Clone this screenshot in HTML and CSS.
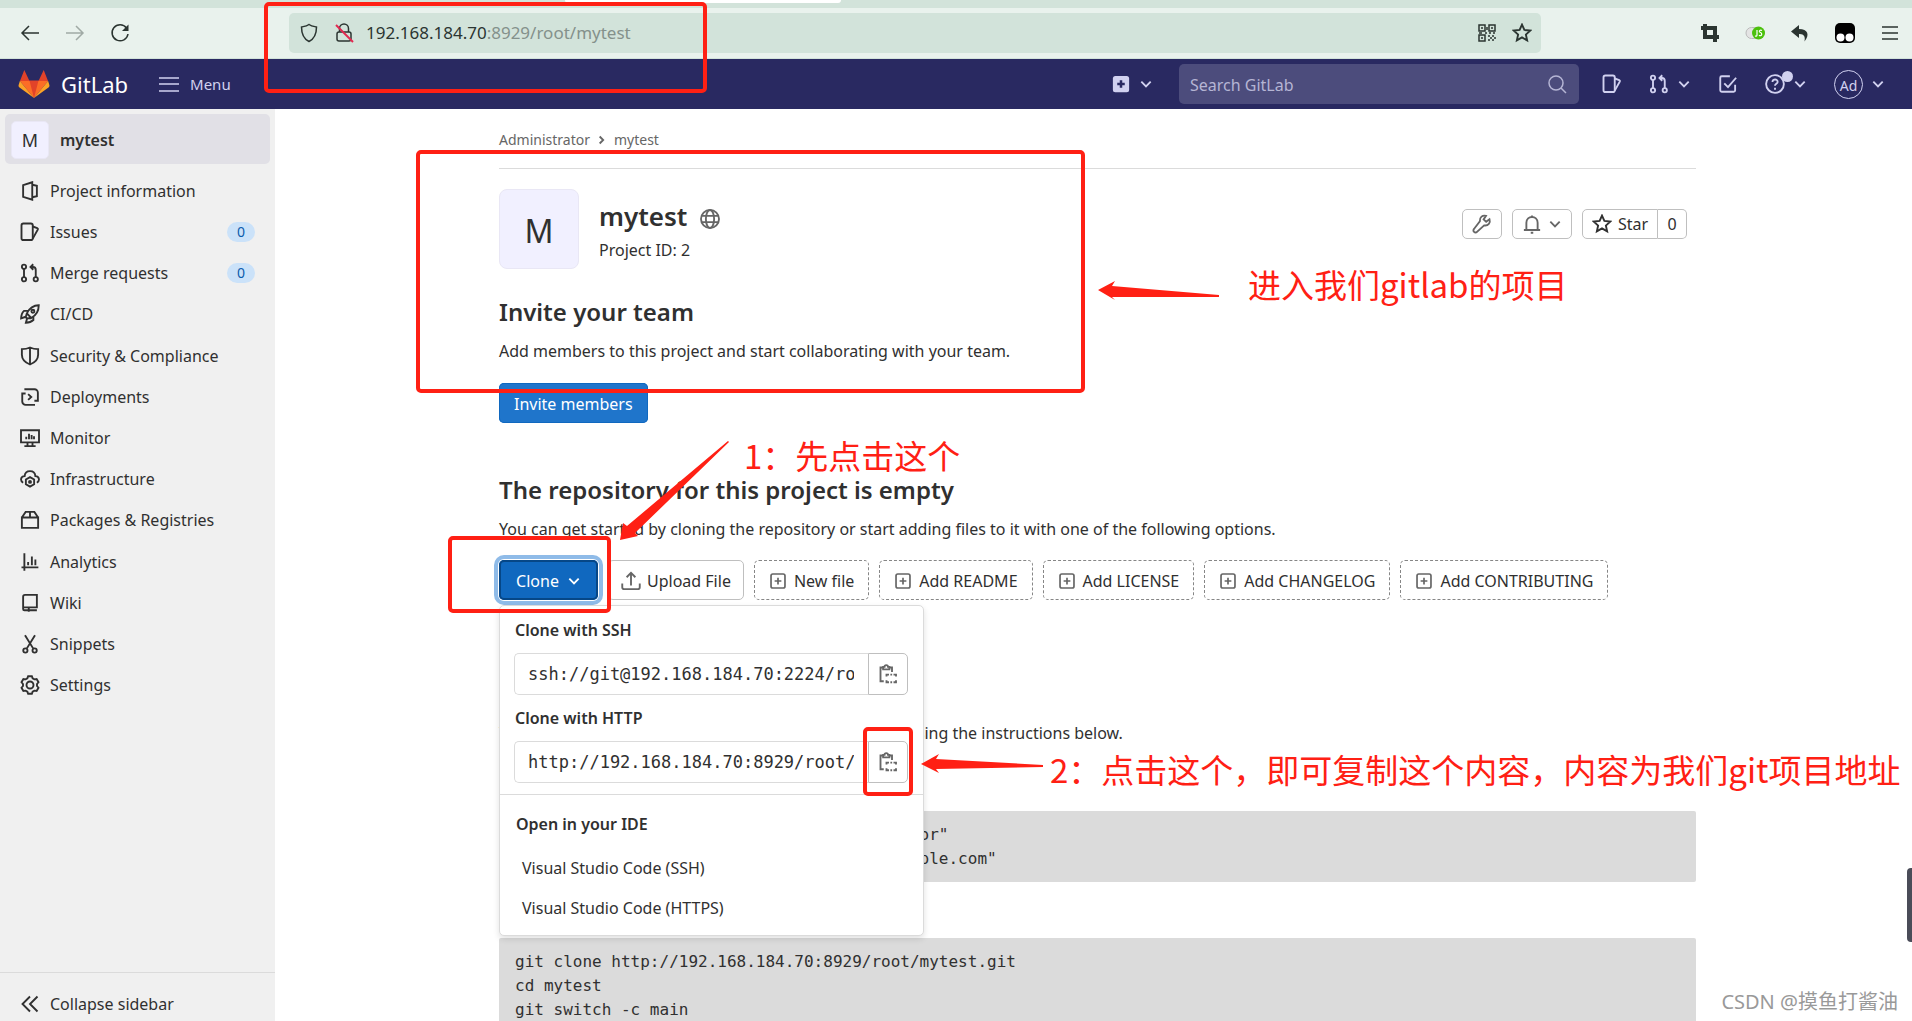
FILE: index.html
```html
<!DOCTYPE html>
<html lang="en">
<head>
<meta charset="utf-8">
<title>Administrator / mytest · GitLab</title>
<link rel="stylesheet" href="styles.css">
</head>
<body>
<svg class="defs" aria-hidden="true">
  <symbol id="chevron" viewBox="0 0 12 12"><path d="M2 4l4 4 4-4"/></symbol>
  <symbol id="issues" viewBox="0 0 16 16"><rect x="1.2" y="1.2" width="9" height="13.2" rx="1.5"/><path d="M10.2 3.6l3.6 1.3a.8.8 0 0 1 .5 1l-4.1 7.4"/></symbol>
  <symbol id="merge" viewBox="0 0 16 16"><circle cx="3.2" cy="3" r="1.7"/><circle cx="3.2" cy="13" r="1.7"/><circle cx="12.6" cy="13" r="1.7"/><path d="M3.2 4.7v6.6M12.6 11.3V5.5c0-1.4-.8-2.3-2.2-2.3H8.8M10.6 1L8.4 3.2l2.2 2.2"/></symbol>
  <symbol id="plus-box" viewBox="0 0 16 16"><rect x="1.8" y="1.8" width="12.4" height="12.4" rx="1.6"/><path d="M8 5v6M5 8h6"/></symbol>
  <symbol id="paste" viewBox="0 0 16 16"><path d="M4.500 2.800H2v11h2.600M9 2.800h2.200v3.500M4.100 4.300h5v-2H8a1.400 1.400 0 0 0-2.800 0H4.100z"/><path d="M6.800 10V8.500h2M12.400 8.500h2V10M6.800 12.900v1.700h2M12.400 14.600h2v-1.700M9.900 8.500h1.400M9.900 14.600h1.400"/></symbol>
  <symbol id="star" viewBox="0 0 16 16"><path d="M8 1.300l1.900 4.300 4.700.500-3.500 3.100 1 4.700L8 11.500l-4.100 2.400 1-4.700L1.400 6.100l4.700-.500z"/></symbol>
</svg>

<header class="browser">
  <div class="tabs"><span class="tab"></span></div>
  <div class="toolbar">
    <nav class="history" aria-label="History">
      <button type="button" aria-label="Back"><svg class="icon" viewBox="0 0 20 20"><path d="M19 10H2M9 3l-7 7 7 7"/></svg></button>
      <button type="button" aria-label="Forward" class="faded"><svg class="icon" viewBox="0 0 20 20"><path d="M1 10h17M11 3l7 7-7 7"/></svg></button>
      <button type="button" aria-label="Reload"><svg class="icon" viewBox="0 0 20 20"><path d="M16.500 5A8 8 0 1 0 18 11"/><path class="solid" d="M18.500 1.500v6.500H12z"/></svg></button>
    </nav>
    <div class="address">
      <svg class="icon" viewBox="0 0 20 20"><path d="M10 1.500c2 1.500 5 2 7.500 2.500 0 7-1.500 11.500-7.500 14.500C4 15.500 2.500 11 2.500 4 5 3.500 8 3 10 1.500z"/></svg>
      <svg class="icon lock" viewBox="0 0 20 20"><rect x="3" y="9" width="14" height="9" rx="2"/><path d="M5.500 9V5.500a4.500 4.500 0 0 1 9 0V9"/><path class="slash" d="M2 2l17 17"/></svg>
      <span class="url">192.168.184.70<span>:8929/root/mytest</span></span>
      <svg class="icon qr" viewBox="0 0 20 20"><path d="M2 2h6v6H2zM12 2h6v6h-6zM2 12h6v6H2z"/><path d="M4 5h2M14 5h2M4 15h2M8 10h2M12 10h2M16 10h2M11 13h2M15 13h2M13 15h2M17 15h2M11 17h2M15 17h2M2 10h3M10 4v3"/></svg>
      <svg class="icon" viewBox="0 0 16 16"><use href="#star"/></svg>
    </div>
    <div class="extensions">
      <svg class="icon bold" viewBox="0 0 20 20"><path d="M5 1v13h14M1 5h14v14"/></svg>
      <svg class="icon" viewBox="0 0 20 20"><rect x="1" y="4.500" width="18" height="11" rx="5.500" fill="#e4e4e4" stroke="#bbb" stroke-width="1"/><circle cx="13.500" cy="10" r="6.500" fill="#4bc10c" stroke="none"/><path d="M12 7v5c0 1-.5 1.300-2 1M17 7.500c-2-.9-3 .3-2.500 1.300.600 1 2.500.800 2.200 2.700-.300 1.400-1.700 1.500-2.700.800" stroke="#fff" stroke-width="1.200"/></svg>
      <svg class="icon" viewBox="0 0 20 20"><path class="solid" d="M9 2L1 8.500 9 15v-4c5-.3 6.500 2.500 5.500 7.500C20 12 18 6 9 6z"/></svg>
      <svg class="icon" viewBox="0 0 20 20"><rect x="0" y="0" width="20" height="20" rx="5" fill="#000" stroke="none"/><circle cx="5.500" cy="14.500" r="4" fill="#fff" stroke="none"/><circle cx="14.500" cy="14.500" r="4" fill="#fff" stroke="none"/></svg>
      <svg class="icon" viewBox="0 0 20 20"><path d="M2 4h16M2 10h16M2 16h16"/></svg>
    </div>
  </div>
</header>

<header class="navbar">
  <a class="brand" href="#">
    <svg viewBox="0 0 36 34"><path fill="#e24329" d="M18 33L6 13h24z"/><path fill="#e24329" d="M7 1l6 13H2zM29 1l-6 13h11z"/><path fill="#fc6d26" d="M18 33L13 13.500H2zM18 33l5-19.500h11z"/><path fill="#fca326" d="M2 13.500L.500 18.500c-.200.900 0 1.600.700 2.100L18 33zM34 13.500l1.500 5c.2.900 0 1.600-.7 2.100L18 33z"/></svg>
    GitLab
  </a>
  <button type="button" class="menu"><svg class="icon" viewBox="0 0 20 20"><path d="M0 4h20M0 10h20M0 17h20"/></svg>Menu</button>
  <button type="button" class="create" aria-label="Create new"><svg class="icon" viewBox="0 0 16 16"><rect class="solid" x="1.500" y="1.500" width="13" height="13" rx="2"/><path d="M8 5v6M5 8h6" stroke="#292961" stroke-width="2"/></svg><svg class="chev"><use href="#chevron"/></svg></button>
  <form class="search">
    <input type="text" placeholder="Search GitLab" aria-label="Search GitLab">
    <svg class="icon" viewBox="0 0 20 20"><circle cx="9" cy="9" r="7"/><path d="M14 14l5 5"/></svg>
  </form>
  <nav class="user-links" aria-label="User">
    <button type="button" aria-label="Issues"><svg class="icon"><use href="#issues"/></svg></button>
    <button type="button" aria-label="Merge requests"><svg class="icon"><use href="#merge"/></svg><svg class="chev"><use href="#chevron"/></svg></button>
    <button type="button" aria-label="To-do list"><svg class="icon" viewBox="0 0 16 16"><path d="M9.500 1.800H3a1.200 1.200 0 0 0-1.200 1.200v10A1.200 1.200 0 0 0 3 14.200h9.500a1.200 1.200 0 0 0 1.200-1.200V8.500M5 7.500l3 3 6.500-7.500"/></svg></button>
    <button type="button" aria-label="Help" class="help"><svg class="icon" viewBox="0 0 16 16"><circle cx="8" cy="8" r="7.100"/><path d="M6 6.300c0-2.600 4.200-2.500 4.100 0C10.100 7.800 8 7.700 8 9.300M8 11v1.500"/></svg><span class="dot"></span><svg class="chev"><use href="#chevron"/></svg></button>
    <button type="button" aria-label="Account"><span class="account">Ad</span><svg class="chev"><use href="#chevron"/></svg></button>
  </nav>
</header>

<div class="body">
  <aside class="sidebar">
    <a class="project" href="#"><span class="tile">M</span>mytest</a>
    <ul>
      <li><a href="#"><svg class="icon" viewBox="0 0 16 16"><path d="M9.800 1L2.500 3.300v9.400L9.800 15zM9.800 3l3.700.800v8.400l-3.700.800"/></svg>Project information</a></li>
      <li><a href="#"><svg class="icon"><use href="#issues"/></svg>Issues<span class="count">0</span></a></li>
      <li><a href="#"><svg class="icon"><use href="#merge"/></svg>Merge requests<span class="count">0</span></a></li>
      <li><a href="#"><svg class="icon" viewBox="0 0 16 16"><path d="M15 1c-5 0-7.500 2.500-9.500 6.500L9 11.200c4-2.200 6-4.700 6-10.200zM6.500 5.500H3.200C1.500 7 1 9 .9 11.500l3.600-1.300M10.700 9.800v3c-1.500 1.500-3.500 2.200-6 2.200l1-3.500M5.500 7.500l-1 3.200 1.200.800L9 11.200"/><circle cx="10.300" cy="5.800" r="1.200"/></svg>CI/CD</a></li>
      <li><a href="#"><svg class="icon" viewBox="0 0 16 16"><path d="M8 1.200c-2 .9-4.200 1.300-6.500 1.300v4.500c0 3.800 3 6.400 6.500 7.800 3.500-1.400 6.500-4 6.500-7.800V2.500C12.200 2.500 10 2.100 8 1.200zM8 1.200v13.600"/></svg>Security &amp; Compliance</a></li>
      <li><a href="#"><svg class="icon" viewBox="0 0 16 16"><path d="M3.500 1.800h8A2.700 2.700 0 0 1 14.300 4.500v6.500h-2.800M12 14.300H4.500A2.700 2.700 0 0 1 1.800 11.600V5.200h2.700M6.500 5.700L9 8l-2.500 2.300"/></svg>Deployments</a></li>
      <li><a href="#"><svg class="icon" viewBox="0 0 16 16"><path d="M.8 1.800h14.400v9.700H.8zM6 11.500v3M10 11.500v3M3.500 14.500h9M5 7v2M7.200 4.500V9M9.300 5.500V9M11.200 6.500V9"/></svg>Monitor</a></li>
      <li><a href="#"><svg class="icon" viewBox="0 0 16 16"><path d="M2.500 11C0 9.500.3 6 3.700 5.700 4.200.3 11.800.3 12.300 5.700c3.400.3 3.700 3.800 1.200 5.300"/><path d="M8 6.500l3.300 1.900v3.800L8 14.100l-3.300-1.900V8.400z"/><circle cx="8" cy="10.300" r=".8"/></svg>Infrastructure</a></li>
      <li><a href="#"><svg class="icon" viewBox="0 0 16 16"><path d="M1.500 6h13v8.300h-13zM1.500 6l3-4.500h7l3 4.500M8 1.500V6"/></svg>Packages &amp; Registries</a></li>
      <li><a href="#"><svg class="icon" viewBox="0 0 16 16"><path d="M3.500 1v14M1.200 12.300h13.500M6.500 8v2.500M9.500 3.500v7M12.300 6v4.500"/></svg>Analytics</a></li>
      <li><a href="#"><svg class="icon" viewBox="0 0 16 16"><path d="M4 1.500h9.500V11.500h-11V3A1.500 1.500 0 0 1 4 1.500zM2.500 11.500v1.300c0 .6.500 1 1 1h10M7 12v3"/></svg>Wiki</a></li>
      <li><a href="#"><svg class="icon" viewBox="0 0 16 16"><path d="M4 1l6.500 10.500M12 1L5.500 11.500"/><circle cx="4.300" cy="13.200" r="1.700"/><circle cx="11.700" cy="13.200" r="1.700"/></svg>Snippets</a></li>
      <li><a href="#"><svg class="icon" viewBox="0 0 16 16"><path d="M6.500 1h3l.6 1.700 1.400.8 1.800-.3 1.500 2.600L13.600 7.200v1.600l1.200 1.400-1.500 2.600-1.800-.3-1.400.8L9.500 15h-3l-.6-1.700-1.400-.8-1.800.3-1.500-2.600 1.200-1.400V7.200L1.200 5.800l1.500-2.600 1.800.3 1.400-.8z"/><circle cx="8" cy="8" r="2.800"/></svg>Settings</a></li>
    </ul>
    <button type="button" class="collapse"><svg class="icon" viewBox="0 0 16 16"><path d="M8 2L2 8l6 6M14 2L8 8l6 6"/></svg>Collapse sidebar</button>
  </aside>

  <main>
    <nav class="crumbs" aria-label="Breadcrumb"><a href="#">Administrator</a><svg class="chev" viewBox="0 0 12 12"><path d="M4 3l3 3-3 3"/></svg><a href="#">mytest</a></nav>

    <section class="project-head">
      <span class="avatar">M</span>
      <div class="title">
        <h1>mytest <svg class="icon" viewBox="0 0 16 16"><circle cx="8" cy="8" r="7.200"/><ellipse cx="8" cy="8" rx="3.300" ry="7.200"/><path d="M1.500 5.500h13M1.500 10.500h13"/></svg></h1>
        <p>Project ID: 2</p>
      </div>
      <div class="actions">
        <button type="button" class="small" aria-label="Configure"><svg class="icon" viewBox="0 0 16 16"><path d="M14 4.200l-2.700 2-2-1.900L11.200 1.500C8.500.7 6 2.500 6.300 5.800L1.600 12a1.600 1.600 0 0 0 2.400 2.300l5.700-5.200c3.300.5 5.300-2 4.300-4.900z"/></svg></button>
        <button type="button" class="small bell" aria-label="Notifications"><svg class="icon" viewBox="0 0 16 16"><path d="M8 1.200v1M3.500 12.500V7c0-6.200 9-6.200 9 0v5.500M1.500 12.800h13M7 15h2"/></svg><svg class="chev"><use href="#chevron"/></svg></button>
        <div class="starred"><button type="button" class="small"><svg class="icon"><use href="#star"/></svg>Star</button><a class="small" href="#">0</a></div>
      </div>
    </section>

    <section class="invite">
      <h2>Invite your team</h2>
      <p>Add members to this project and start collaborating with your team.</p>
      <button type="button" class="primary">Invite members</button>
    </section>

    <section class="empty">
      <h2>The repository for this project is empty</h2>
      <p>You can get started by cloning the repository or start adding files to it with one of the following options.</p>
      <div class="files">
        <div class="clone">
          <button type="button" class="primary focused" aria-expanded="true">Clone<svg class="chev"><use href="#chevron"/></svg></button>
          <div class="dropdown">
            <div class="urls">
              <label for="ssh">Clone with SSH</label>
              <div class="copy"><input id="ssh" type="text" readonly value="ssh://git@192.168.184.70:2224/root/mytest.git"><button type="button" aria-label="Copy SSH URL"><svg class="icon"><use href="#paste"/></svg></button></div>
              <label for="http">Clone with HTTP</label>
              <div class="copy"><input id="http" type="text" readonly value="http://192.168.184.70:8929/root/mytest.git"><button type="button" aria-label="Copy HTTP URL"><svg class="icon"><use href="#paste"/></svg></button></div>
            </div>
            <div class="ide">
              <h3>Open in your IDE</h3>
              <a href="#">Visual Studio Code (SSH)</a>
              <a href="#">Visual Studio Code (HTTPS)</a>
            </div>
          </div>
        </div>
        <button type="button" class="file"><svg class="icon" viewBox="0 0 16 16"><path d="M1 10v3a1.500 1.500 0 0 0 1.500 1.500h11A1.500 1.500 0 0 0 15 13v-3M8 11.500V1.500M4.500 5L8 1.500 11.500 5"/></svg>Upload File</button>
        <button type="button" class="file dashed"><svg class="icon"><use href="#plus-box"/></svg>New file</button>
        <button type="button" class="file dashed"><svg class="icon"><use href="#plus-box"/></svg>Add README</button>
        <button type="button" class="file dashed"><svg class="icon"><use href="#plus-box"/></svg>Add LICENSE</button>
        <button type="button" class="file dashed"><svg class="icon"><use href="#plus-box"/></svg>Add CHANGELOG</button>
        <button type="button" class="file dashed"><svg class="icon"><use href="#plus-box"/></svg>Add CONTRIBUTING</button>
      </div>
    </section>

    <section class="instructions">
      <h2>Command line instructions</h2>
      <p>You can also upload existing files from your computer using the instructions below.</p>
      <h3>Git global setup</h3>
      <pre>git config --global user.name "Administrator"
git config --global user.email "admin@example.com"</pre>
      <h3>Create a new repository</h3>
      <pre>git clone http://192.168.184.70:8929/root/mytest.git
cd mytest
git switch -c main
touch README.md</pre>
    </section>
  </main>
</div>

<span class="scroll-thumb"></span>

<svg class="marks" aria-hidden="true">
  <rect x="266" y="4" width="439" height="87" rx="3"/>
  <rect x="418" y="152" width="665" height="239" rx="3"/>
  <rect x="450" y="538" width="159" height="73" rx="3"/>
  <rect x="865" y="729" width="46" height="65" rx="3"/>
  <path d="M1098 290l17-9-3 5 107 9v2l-107 0 3 3z"/>
  <path d="M620 540L623 523 627 526 728 441 729 442 635 533 638 536z"/>
  <path d="M921 764l18-10-3 5 107 6v2l-107 2 3 4z"/>
</svg>
<span class="note note-project">进入我们gitlab的项目</span>
<span class="note note-clone">1：先点击这个</span>
<span class="note note-copy">2：点击这个，即可复制这个内容，内容为我们git项目地址</span>
<span class="watermark">CSDN @摸鱼打酱油</span>
</body>
</html>
```
FILE: styles.css
```css
* { box-sizing: border-box; }

body {
  margin: 0;
  height: 100vh;
  display: flex;
  flex-direction: column;
  position: relative;
  overflow: hidden;
  background: #fff;
  color: #303030;
  font: 16px/24px "Noto Sans", "Noto Sans CJK SC", sans-serif;
}

h1, h2, h3, p, ul, pre { margin: 0; padding: 0; }
a { color: inherit; text-decoration: none; }
button, input { font: inherit; color: inherit; }
button { margin: 0; padding: 0; border: 0; background: none; display: flex; align-items: center; justify-content: center; }

.defs { position: absolute; width: 0; height: 0; }
.icon, .chev { fill: none; stroke: currentColor; stroke-width: 1.5; flex: none; }
.icon { width: 20px; height: 20px; }
.chev { width: 14px; height: 14px; stroke-width: 1.6; }
.solid { fill: currentColor; stroke: none; }

/* Browser chrome */
.browser { flex: none; background: #e9f2ed; color: #2b3531; border-bottom: 1px solid #d2e3da; }
.tabs { height: 8px; background: #d2e3da; }
.tab { display: block; width: 276px; height: 3px; margin-left: 565px; background: #fff; border-radius: 0 0 4px 4px; }
.toolbar { height: 50px; display: flex; align-items: center; padding: 0 12px 0 20px; }
.history { width: 269px; display: flex; gap: 25px; }
.faded { color: #a0aaa5; }
.address { flex: 1; height: 40px; padding: 0 9px 0 10px; display: flex; align-items: center; gap: 15px; background: #d2e3da; border-radius: 5px; }
.slash { stroke: #e22850; stroke-width: 2; }
.url { flex: 1; margin-left: -3px; font-size: 17px; }
.url span { color: #84918b; }
.qr { stroke-width: 1.5; }
.extensions { margin-left: 159px; display: flex; gap: 25px; }
.bold { stroke-width: 4; }

/* GitLab top bar */
.navbar { flex: none; height: 50px; display: flex; align-items: center; padding: 0 27px 0 18px; background: #292961; color: #d1d1f0; }
.brand { display: flex; align-items: center; gap: 11px; color: #fff; font-size: 22px; }
.brand svg { width: 32px; height: 30px; }
.menu { gap: 11px; margin-left: 31px; font-size: 15px; }
.create { margin-left: auto; gap: 8px; }
.search { position: relative; width: 400px; margin: 0 23px 0 26px; }
.search input { display: block; width: 100%; height: 40px; padding: 2px 11px 0; border: 0; border-radius: 5px; background: #4c4c7c; font-size: 16px; }
.search input::placeholder { color: #b5b5d4; opacity: 1; }
.search .icon { position: absolute; right: 12px; top: 10px; color: #b5b5d4; }
.user-links { display: flex; align-items: center; gap: 27px; }
.user-links button { gap: 8px; }
.help { position: relative; }
.dot { position: absolute; left: 17px; top: -3px; width: 11px; height: 11px; border-radius: 50%; background: #d1d1f0; }
.account { width: 29px; height: 29px; border: 1px solid #d1d1f0; border-radius: 50%; font-size: 14px; line-height: 30px; text-align: center; }

.body { flex: 1; min-height: 0; display: flex; }

/* Project sidebar */
.sidebar { flex: none; width: 275px; display: flex; flex-direction: column; background: #f0f0f0; }
.project { height: 50px; margin: 5px 5px 6px; padding: 1px 6px 0; display: flex; align-items: center; gap: 11px; background: #e1e0e6; border-radius: 5px; font-weight: 600; }
.tile, .avatar { display: grid; place-items: center; background: #f1f0ff; border: 1px solid #e9e7f5; font-weight: 400; }
.tile { width: 38px; height: 38px; border-radius: 5px; font-size: 18px; }
.sidebar ul { height: 536px; display: grid; grid-auto-rows: 1fr; list-style: none; }
.sidebar li a { height: 100%; padding: 0 20px; display: flex; align-items: center; gap: 10px; }
.count { margin-left: auto; width: 28px; height: 20px; border-radius: 10px; background: #cbe2f9; color: #0b5cad; font-size: 14px; line-height: 20px; text-align: center; }
.collapse { margin-top: auto; height: 49px; padding: 13px 20px 0; justify-content: flex-start; gap: 10px; border-top: 1px solid #dbdbdb; }

/* Project page */
main { flex: 1; min-width: 0; padding: 0 216px 0 224px; overflow: hidden; }
.crumbs { height: 60px; padding-top: 2px; display: flex; align-items: center; gap: 5px; border-bottom: 1px solid #dbdbdb; color: #666; font-size: 14px; }
.project-head { margin-top: 20px; height: 80px; display: flex; }
.avatar { width: 80px; height: 80px; padding-top: 4px; border-radius: 8px; font-size: 32px; }
.title { margin-left: 20px; padding-top: 9px; }
h1 { display: flex; align-items: center; gap: 13px; font-size: 26px; line-height: 36px; font-weight: 600; }
h1 .icon { margin-top: 6px; color: #666; }
.title p { line-height: 32px; }
.actions { margin-left: auto; margin-right: 9px; padding-top: 20px; display: flex; align-items: flex-start; gap: 10px; color: #666; }
.small { width: 40px; height: 30px; display: flex; align-items: center; justify-content: center; border: 1px solid #bfbfbf; border-radius: 5px; }
.bell { width: 60px; gap: 6px; }
.starred { display: flex; color: #303030; }
.starred button { width: 76px; gap: 6px; border-radius: 5px 0 0 5px; }
.starred a { width: 29px; border-left: 0; border-radius: 0 5px 5px 0; }

h2 { font-size: 24px; line-height: 30px; font-weight: 600; }
.invite { margin-top: 28px; }
.invite p, .empty p { margin-top: 12px; }
.primary { height: 40px; padding: 2px 15px 0; border-radius: 5px; background: #1f75cb; box-shadow: inset 0 0 0 1px #1068bf; color: #fff; }
.invite .primary { margin-top: 20px; }
.empty { margin-top: 52px; }
.files { margin-top: 19px; display: flex; gap: 10px; }
.clone { position: relative; }
.focused { width: 99px; gap: 8px; background: #1068bf; box-shadow: inset 0 0 0 2px #064787, 0 0 0 1px #fff, 0 0 0 5px #8fbbe8; }
.file { height: 40px; padding: 2px 12px 0; gap: 6px; border: 1px solid #bfbfbf; border-radius: 5px; }
.file .icon { color: #666; }
.dashed { padding: 2px 14px 0; gap: 7px; border: 1px dashed #868686; }
.dashed .icon { width: 18px; height: 18px; }

.dropdown { position: absolute; z-index: 1; left: 0; top: 45px; width: 425px; padding-bottom: 7px; background: #fff; border: 1px solid #dbdbdb; border-radius: 5px; box-shadow: 0 3px 6px rgba(0, 0, 0, .12); }
.urls { padding: 1px 15px 11px 14px; border-bottom: 1px solid #dbdbdb; }
.urls label { display: block; margin: 11px 0; padding-left: 1px; font-weight: 600; }
.copy { display: flex; height: 42px; }
.copy input { flex: 1; min-width: 0; padding: 0 14px 0 13px; border: 1px solid #dbdbdb; border-right: 0; border-radius: 5px 0 0 5px; font: 17px "DejaVu Sans Mono", monospace; }
.copy button { width: 40px; border: 1px solid #bfbfbf; border-radius: 0 5px 5px 0; color: #666; }
.ide { padding: 17px 16px 0; }
.ide h3 { margin-bottom: 12px; font-size: 16px; line-height: 24px; font-weight: 600; }
.ide a { display: block; padding-left: 6px; line-height: 40px; }

.instructions { margin-top: 74px; }
.instructions p { margin-top: 17px; }
.instructions h3 { margin: 21px 0 15px; font-size: 20px; line-height: 30px; font-weight: 600; }
.instructions pre + h3 { margin-top: 11px; }
pre { padding: 12px 16px 11px; background: #dbdbdb; border-radius: 2px; font: 16px/24px "DejaVu Sans Mono", monospace; }

/* Markup drawn over the page */
.scroll-thumb { position: absolute; right: 0; top: 868px; width: 5px; height: 74px; border-radius: 4px 0 0 4px; background: #4a4c58; }
.marks { position: absolute; left: 0; top: 0; width: 100%; height: 100%; z-index: 2; pointer-events: none; }
.marks rect { fill: none; stroke: #ff2014; stroke-width: 4; }
.marks path { fill: #ff2014; }
.note { position: absolute; z-index: 3; color: #ff2014; font: 33px/40px "Noto Sans CJK SC", sans-serif; white-space: nowrap; }
.note-project { left: 1248px; top: 264px; }
.note-clone { left: 744px; top: 435px; }
.note-copy { left: 1050px; top: 749px; }
.watermark { position: absolute; z-index: 3; right: 14px; bottom: 6px; color: #999; font: 20px/26px "Noto Sans", "Noto Sans CJK SC", sans-serif; }
```
